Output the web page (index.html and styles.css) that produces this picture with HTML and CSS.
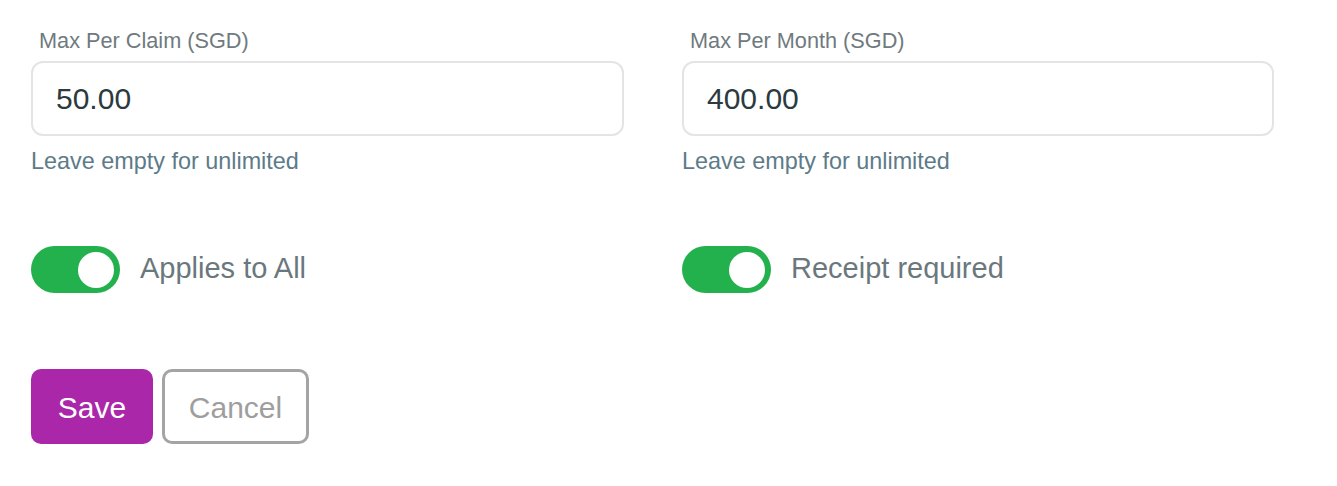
FILE: index.html
```html
<!DOCTYPE html>
<html lang="en">
<head>
<meta charset="utf-8">
<title>Claim limits</title>
<link rel="stylesheet" href="styles.css">
</head>
<body>
<form class="form">
  <div class="grid">
    <div class="field">
      <label class="field-label">Max Per Claim (SGD)</label>
      <div class="input">50.00</div>
      <div class="help">Leave empty for unlimited</div>
    </div>
    <div class="field">
      <label class="field-label">Max Per Month (SGD)</label>
      <div class="input">400.00</div>
      <div class="help">Leave empty for unlimited</div>
    </div>
    <div class="switch-row">
      <span class="switch"><span class="knob"></span></span>
      <span class="switch-label">Applies to All</span>
    </div>
    <div class="switch-row">
      <span class="switch"><span class="knob"></span></span>
      <span class="switch-label">Receipt required</span>
    </div>
  </div>
  <div class="actions">
    <button type="button" class="btn btn-save">Save</button>
    <button type="button" class="btn btn-cancel">Cancel</button>
  </div>
</form>
</body>
</html>
```

FILE: styles.css
```css
html, body {
  margin: 0;
  padding: 0;
  background: #ffffff;
}
body {
  font-family: "Liberation Sans", Arial, Helvetica, sans-serif;
}
.form {
  padding: 29px 0 0 31px;
}
.grid {
  display: grid;
  grid-template-columns: 593px 592px;
  column-gap: 58px;
  row-gap: 71px;
}
.field {
  display: flex;
  flex-direction: column;
}
.field-label {
  font-size: 21.7px;
  line-height: 24px;
  color: #6f7a7e;
  padding-left: 8px;
}
.input {
  margin-top: 8px;
  height: 75px;
  box-sizing: border-box;
  border: 2px solid #e4e4e4;
  border-radius: 12px;
  padding: 0 23px;
  display: flex;
  align-items: center;
  font-size: 30px;
  color: #2b3a40;
}
.help {
  margin-top: 11px;
  font-size: 23.4px;
  line-height: 28px;
  color: #5d7b88;
}
.switch-row {
  display: flex;
  align-items: center;
  gap: 20px;
}
.switch {
  width: 89px;
  height: 47px;
  box-sizing: border-box;
  border-radius: 24px;
  background: #22b14c;
  display: flex;
  align-items: center;
  justify-content: flex-end;
  padding-right: 6px;
}
.knob {
  width: 36px;
  height: 36px;
  border-radius: 50%;
  background: #ffffff;
}
.switch-label {
  font-size: 29px;
  line-height: 34px;
  padding-bottom: 3px;
  color: #6a787d;
}
.actions {
  display: flex;
  gap: 9px;
  margin-top: 76px;
}
.btn {
  font-family: "Liberation Sans", Arial, Helvetica, sans-serif;
  font-size: 30px;
  height: 75px;
  box-sizing: border-box;
  border-radius: 10px;
  padding: 2px 0 0;
  cursor: pointer;
}
.btn-save {
  width: 122px;
  background: #ab27aa;
  border: none;
  color: #ffffff;
}
.btn-cancel {
  width: 147px;
  background: #ffffff;
  border: 3px solid #a4a4a4;
  color: #9e9e9e;
}
```
